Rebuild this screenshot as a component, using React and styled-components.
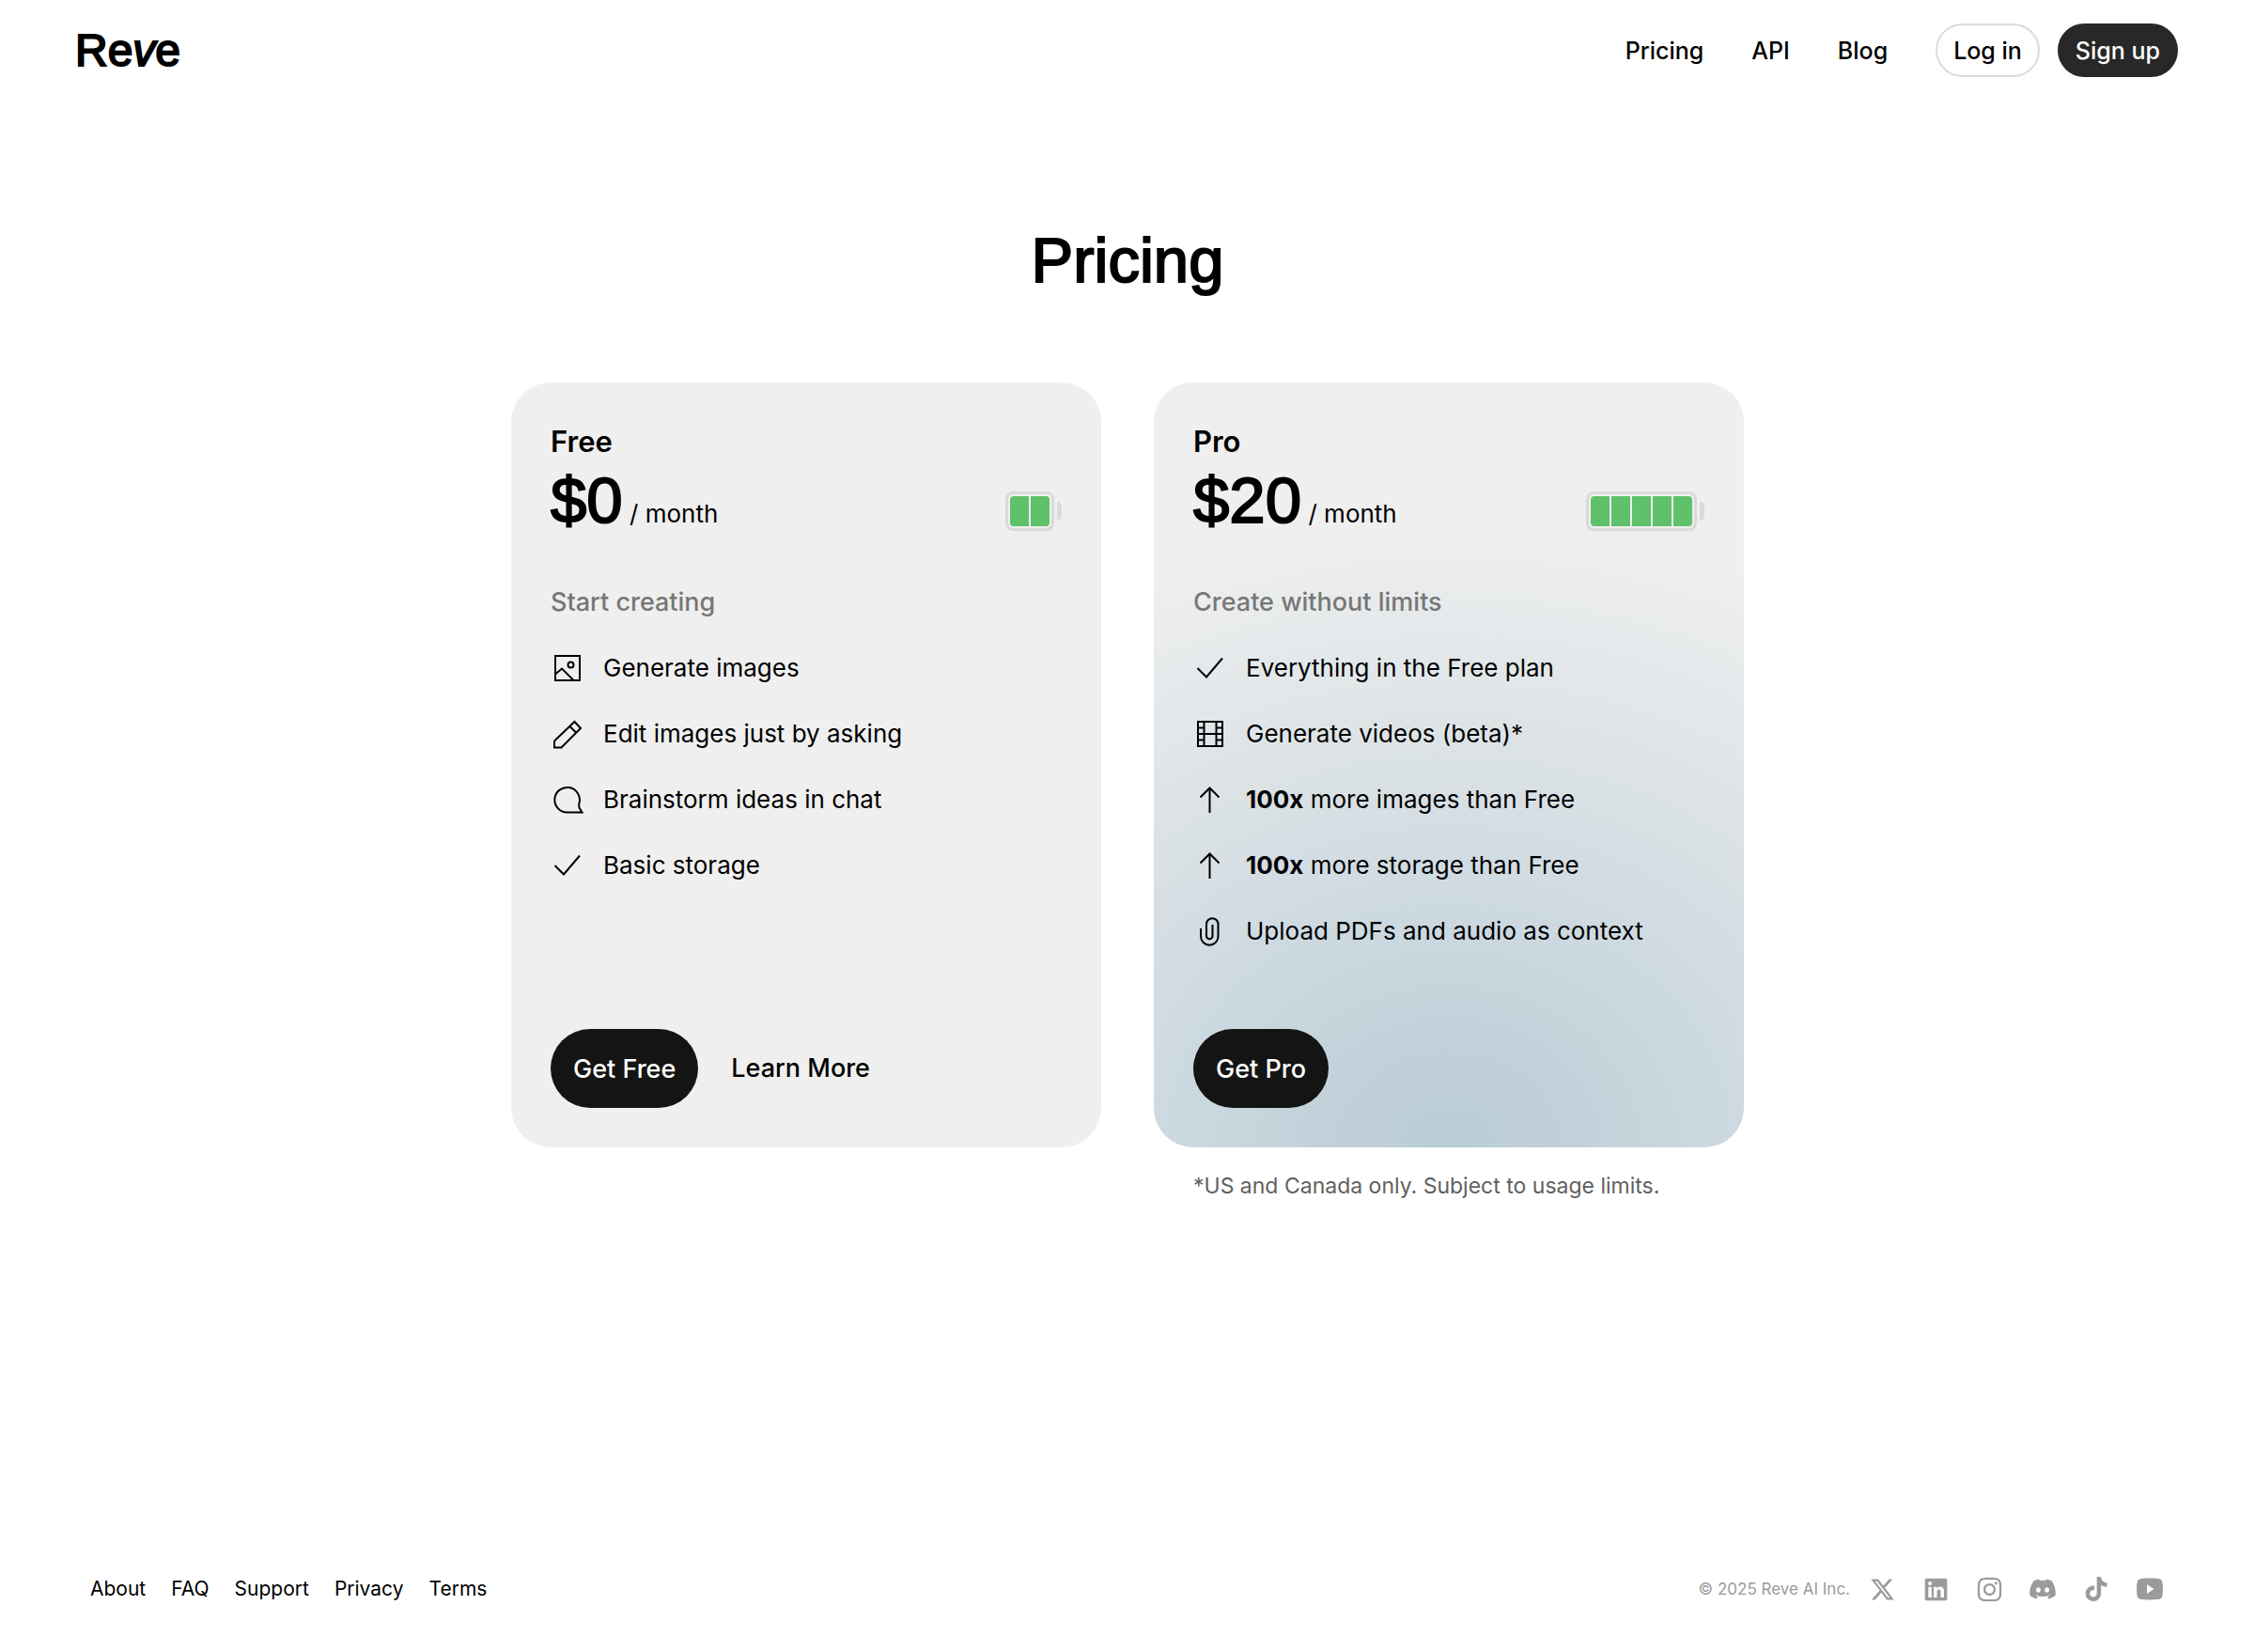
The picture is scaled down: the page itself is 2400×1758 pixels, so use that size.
import React from 'react'
import styled, { createGlobalStyle } from 'styled-components'
import { FaXTwitter, FaLinkedin, FaInstagram, FaDiscord, FaTiktok } from 'react-icons/fa6'

const navLinks = ['Pricing', 'API', 'Blog']
const footerLinks = ['About', 'FAQ', 'Support', 'Privacy', 'Terms']

const plans = [
  {
    name: 'Free',
    price: '$0',
    cells: 2,
    tagline: 'Start creating',
    cta: 'Get Free',
    more: 'Learn More',
    features: [
      { icon: 'image', text: 'Generate images' },
      { icon: 'pencil', text: 'Edit images just by asking' },
      { icon: 'chat', text: 'Brainstorm ideas in chat' },
      { icon: 'check', text: 'Basic storage' },
    ],
  },
  {
    name: 'Pro',
    price: '$20',
    cells: 5,
    tagline: 'Create without limits',
    cta: 'Get Pro',
    glow: true,
    features: [
      { icon: 'check', text: 'Everything in the Free plan' },
      { icon: 'film', text: 'Generate videos (beta)*' },
      { icon: 'arrow', strong: '100x', text: ' more images than Free' },
      { icon: 'arrow', strong: '100x', text: ' more storage than Free' },
      { icon: 'clip', text: 'Upload PDFs and audio as context' },
    ],
  },
]

// all drawn on a 36 x 36 grid
const iconShapes = {
  image: (
    <>
      <rect x="5" y="5" width="26" height="26" />
      <circle cx="21.5" cy="14.5" r="3" />
      <path d="M5 24.5L12 18.5L24.5 31" />
    </>
  ),
  pencil: <path d="M4 25.5V32.5H11.5L32 12L25.5 5L4 25.5M20.5 10L27 16.5" />,
  chat: (
    <path d="M17.5 31.5A13.3 13.3 0 1 1 30.5 21.5Q29.7 24.5 30.5 26.5L33.5 31.5Z" />
  ),
  check: <path d="M4.5 18L14 27.5L31 7.5" />,
  film: (
    <>
      <rect x="5" y="5" width="26" height="26" />
      <path d="M11.5 5V31M24.5 5V31M11.5 18H24.5" />
      <path d="M5 11.5H11.5M5 18H11.5M5 24.5H11.5M24.5 11.5H31M24.5 18H31M24.5 24.5H31" />
    </>
  ),
  arrow: <path d="M17.5 32V5.5M7.5 15.5L17.5 5.5L27.5 15.5" />,
  clip: (
    <path d="M8 15V23.5A9 9 0 0 0 26.5 23.5V10.5A6.2 6.2 0 0 0 14 10.5V23A3.2 3.2 0 0 0 20.5 23V11" />
  ),
}

function Icon({ name }) {
  return (
    <IconSvg viewBox="0 0 36 36" aria-hidden="true">
      {iconShapes[name]}
    </IconSvg>
  )
}

function YoutubeIcon({ size }) {
  return (
    <svg width={size} height={size} viewBox="0 0 28 28" fill="currentColor" fillRule="evenodd">
      <path d="M14 2.5C18 2.5 21 2.6 23 2.9C25.6 3.2 27.2 4.7 27.5 7.2C28.1 11.6 28.1 16.4 27.5 20.8C27.2 23.3 25.6 24.8 23 25.1C17.5 25.6 10.5 25.6 5 25.1C2.4 24.8 0.8 23.3 0.5 20.8C-0.1 16.4 -0.1 11.6 0.5 7.2C0.8 4.7 2.4 3.2 5 2.9C7 2.6 10 2.5 14 2.5ZM11 9V19L18.5 14Z" />
    </svg>
  )
}

const socials = [
  { label: 'X', icon: FaXTwitter, size: 27 },
  { label: 'LinkedIn', icon: FaLinkedin, size: 27 },
  { label: 'Instagram', icon: FaInstagram, size: 29 },
  { label: 'Discord', icon: FaDiscord, size: 30 },
  { label: 'TikTok', icon: FaTiktok, size: 26 },
  { label: 'YouTube', icon: YoutubeIcon, size: 28 },
]

function Battery({ cells }) {
  return (
    <BatteryWrap>
      <BatteryBody>
        {Array.from({ length: cells }, (_, i) => (
          <Cell key={i} />
        ))}
      </BatteryBody>
      <BatteryTip />
    </BatteryWrap>
  )
}

function Plan({ plan }) {
  return (
    <Card $glow={plan.glow}>
      <PlanName>{plan.name}</PlanName>
      <PriceRow>
        <Price>
          {plan.price}
          <Period> / month</Period>
        </Price>
        <Battery cells={plan.cells} />
      </PriceRow>
      <Tagline>{plan.tagline}</Tagline>
      <Features>
        {plan.features.map((feature) => (
          <Feature key={feature.text}>
            <Icon name={feature.icon} />
            <span>
              {feature.strong && <strong>{feature.strong}</strong>}
              {feature.text}
            </span>
          </Feature>
        ))}
      </Features>
      <Actions>
        <CtaButton type="button">{plan.cta}</CtaButton>
        {plan.more && <MoreLink href="#learn">{plan.more}</MoreLink>}
      </Actions>
    </Card>
  )
}

function App() {
  return (
    <Page>
      <GlobalStyle />
      <Header>
        <Logo href="#home">
          Re<i>v</i>e
        </Logo>
        <Nav>
          {navLinks.map((link) => (
            <NavLink key={link} href={`#${link.toLowerCase()}`}>
              {link}
            </NavLink>
          ))}
          <HeaderButtons>
            <HeaderButton type="button">Log in</HeaderButton>
            <HeaderButton type="button" $dark>
              Sign up
            </HeaderButton>
          </HeaderButtons>
        </Nav>
      </Header>
      <Main>
        <Title>Pricing</Title>
        <Plans>
          {plans.map((plan) => (
            <Plan key={plan.name} plan={plan} />
          ))}
          <Footnote>*US and Canada only. Subject to usage limits.</Footnote>
        </Plans>
      </Main>
      <Footer>
        <FooterLinks>
          {footerLinks.map((link) => (
            <FooterLink key={link} href={`#${link.toLowerCase()}`}>
              {link}
            </FooterLink>
          ))}
        </FooterLinks>
        <FooterRight>
          <Copyright>© 2025 Reve AI Inc.</Copyright>
          <Socials>
            {socials.map(({ label, icon: SocialIcon, size }) => (
              <SocialLink key={label} href={`#${label.toLowerCase()}`} aria-label={label}>
                <SocialIcon size={size} />
              </SocialLink>
            ))}
          </Socials>
        </FooterRight>
      </Footer>
    </Page>
  )
}

export default App

const GlobalStyle = createGlobalStyle`
  * {
    box-sizing: border-box;
  }
  body {
    margin: 0;
    background: #fff;
    color: #000;
    font-family: Inter, 'Liberation Sans', sans-serif;
  }
  a {
    color: inherit;
    text-decoration: none;
  }
  button {
    font: inherit;
    cursor: pointer;
  }
`

const Page = styled.div`
  display: flex;
  flex-direction: column;
  min-height: 100vh;
`

const Header = styled.header`
  display: flex;
  align-items: center;
  justify-content: space-between;
  padding: 25px 82px 25px 80px;
`

const Logo = styled.a`
  font-family: 'Liberation Sans', Arial, sans-serif;
  font-size: 48px;
  line-height: 57px;
  -webkit-text-stroke: 2px #000;
`

const Nav = styled.nav`
  display: flex;
  align-items: center;
  gap: 51px;
`

const NavLink = styled.a`
  font-size: 25px;
  line-height: 32px;
  font-weight: 500;
`

const HeaderButtons = styled.div`
  display: flex;
  gap: 19px;
`

const HeaderButton = styled.button`
  height: 57px;
  padding: 0 17px;
  border: 2px solid ${(props) => (props.$dark ? '#282828' : '#dcdcdc')};
  border-radius: 29px;
  background: ${(props) => (props.$dark ? '#282828' : '#fff')};
  color: ${(props) => (props.$dark ? '#fff' : '#000')};
  font-size: 25px;
  font-weight: 500;
`

const Main = styled.main`
  flex: 1;
  padding: 130px 40px 80px;
`

const Title = styled.h1`
  margin: 0 0 90px;
  font-family: 'Liberation Sans', Arial, sans-serif;
  font-size: 67px;
  line-height: 80px;
  font-weight: 400;
  text-align: center;
  -webkit-text-stroke: 2px #000;
`

const Plans = styled.div`
  display: grid;
  grid-template-columns: 1fr 1fr;
  column-gap: 56px;
  max-width: 1312px;
  margin: 0 auto;
`

const Card = styled.section`
  display: flex;
  flex-direction: column;
  padding: 42px;
  border-radius: 42px;
  background: ${(props) =>
    props.$glow
      ? `radial-gradient(125% 82% at 50% 100%, #b8cdd7 0%, #c1cfd9 15%, #c9d7de 32%,
          #d5dde4 51%, #dbe2e4 62%, #e4e8ea 80%, #efefef 100%) #efefef`
      : '#efefef'};
`

const PlanName = styled.h2`
  margin: 0;
  font-size: 31px;
  line-height: 42px;
  font-weight: 600;
`

const PriceRow = styled.div`
  display: flex;
  align-items: center;
  justify-content: space-between;
  height: 84px;
`

const Price = styled.div`
  font-family: 'Liberation Sans', Arial, sans-serif;
  font-size: 69px;
  line-height: 80px;
  -webkit-text-stroke: 2px #000;
`

const Period = styled.span`
  font-family: Inter, 'Liberation Sans', sans-serif;
  font-size: 26px;
  line-height: 36px;
  -webkit-text-stroke: 0;
`

const BatteryWrap = styled.div`
  display: flex;
  align-items: center;
  gap: 3px;
  margin-top: 22px;
`

const BatteryBody = styled.div`
  display: flex;
  gap: 2px;
  padding: 2px;
  border: 3px solid #dadada;
  border-radius: 8px;
  overflow: hidden;
`

const Cell = styled.div`
  width: 20px;
  height: 32px;
  background: #5fc26b;

  &:first-child {
    border-radius: 4px 0 0 4px;
  }

  &:last-child {
    border-radius: 0 4px 4px 0;
  }
`

const BatteryTip = styled.div`
  width: 5px;
  height: 20px;
  border-radius: 0 5px 5px 0;
  background: #dadada;
`

const Tagline = styled.p`
  margin: 48px 0 34px;
  color: #777;
  font-size: 27px;
  line-height: 36px;
  font-weight: 500;
`

const Features = styled.ul`
  display: flex;
  flex-direction: column;
  gap: 34px;
  margin: 0;
  padding: 0;
  list-style: none;
`

const Feature = styled.li`
  display: flex;
  align-items: center;
  gap: 20px;
  font-size: 26px;
  line-height: 36px;

  strong {
    font-weight: 700;
  }
`

const IconSvg = styled.svg`
  flex: none;
  width: 36px;
  height: 36px;
  fill: none;
  stroke: #000;
  stroke-width: 2;
`

const Actions = styled.div`
  display: flex;
  align-items: center;
  gap: 35px;
  margin-top: auto;
  padding-top: 86px;
`

const CtaButton = styled.button`
  height: 84px;
  padding: 0 24px;
  border: none;
  border-radius: 42px;
  background: #141414;
  color: #fff;
  font-size: 27px;
  font-weight: 500;
`

const MoreLink = styled.a`
  font-size: 27px;
  line-height: 36px;
  font-weight: 500;
`

const Footnote = styled.p`
  grid-column: 2;
  margin: 24px 0 0;
  padding: 0 42px;
  color: #5f5f5f;
  font-size: 23px;
  line-height: 34px;
`

const Footer = styled.footer`
  display: flex;
  align-items: center;
  justify-content: space-between;
  padding: 0 96px 51px;
`

const FooterLinks = styled.nav`
  display: flex;
  gap: 27px;
`

const FooterLink = styled.a`
  font-size: 21px;
  line-height: 32px;
`

const FooterRight = styled.div`
  display: flex;
  align-items: center;
  gap: 18px;
  color: #9b9b9b;
`

const Copyright = styled.span`
  font-size: 17px;
  line-height: 32px;
`

const Socials = styled.div`
  display: flex;
  gap: 25px;
`

const SocialLink = styled.a`
  display: flex;
  align-items: center;
  justify-content: center;
  width: 32px;
  height: 32px;
`
